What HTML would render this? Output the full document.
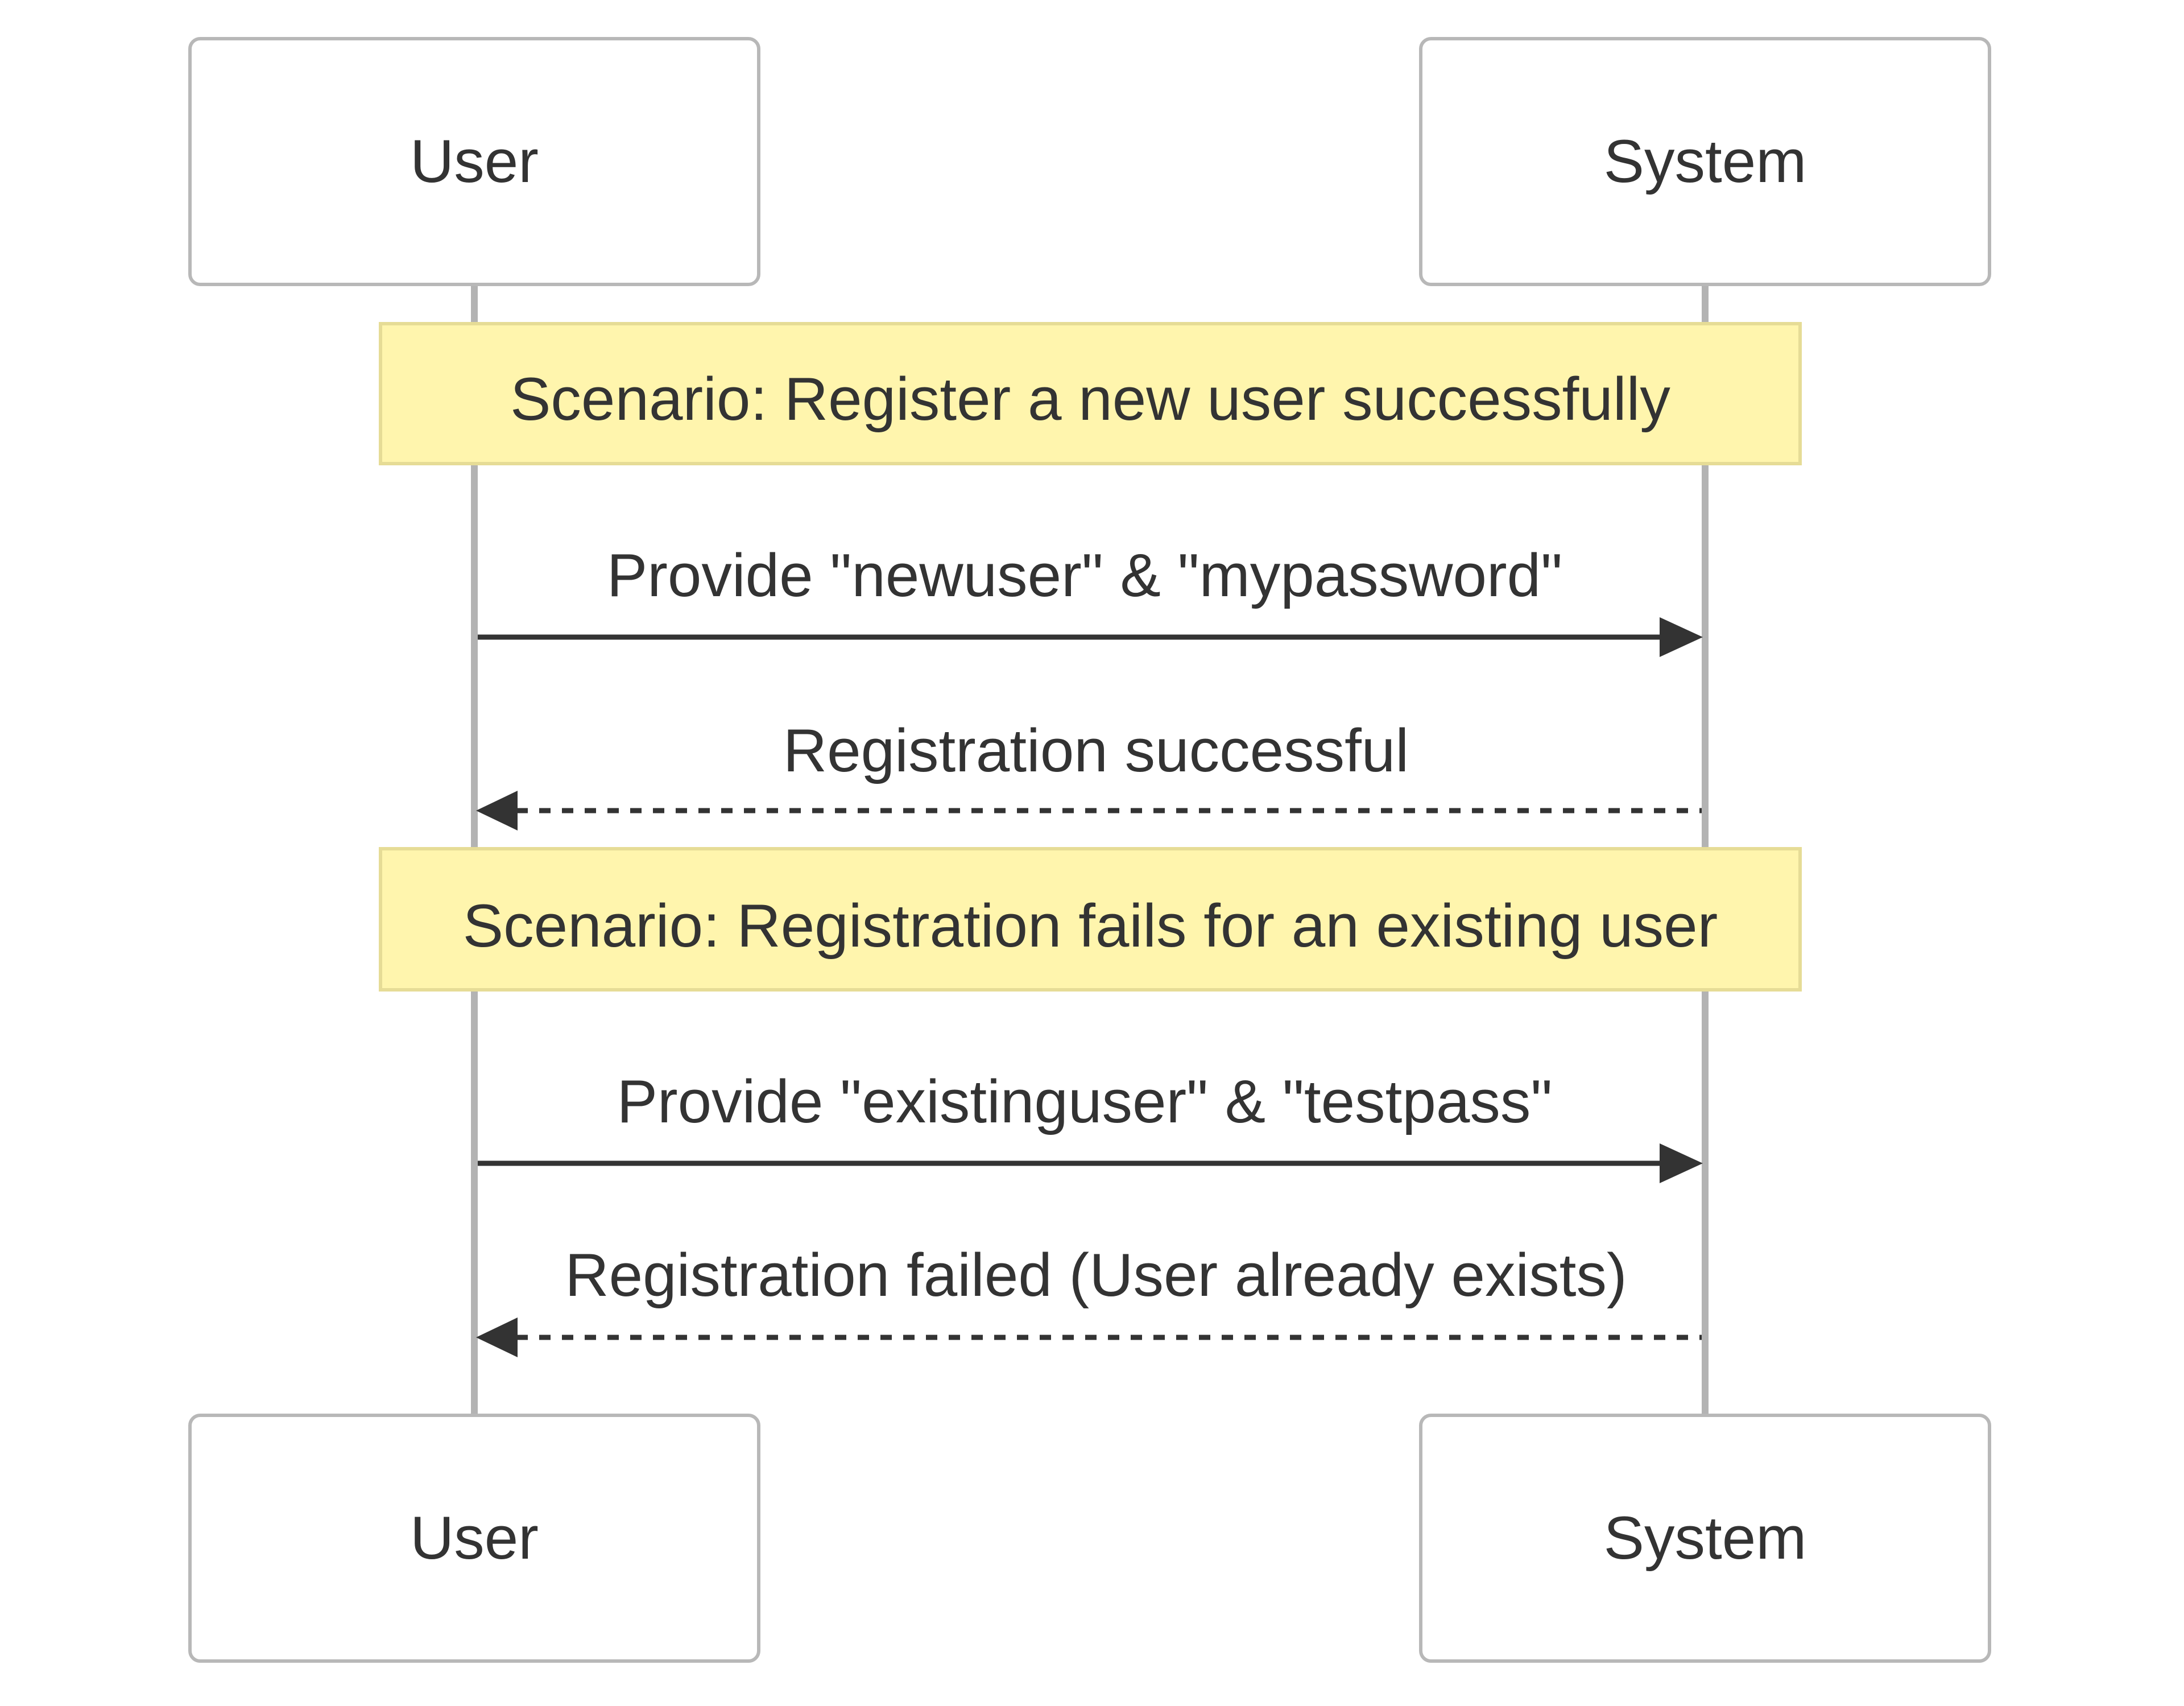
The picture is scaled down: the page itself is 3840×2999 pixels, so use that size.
<!DOCTYPE html>
<html><head><meta charset="utf-8"><style>
html,body{margin:0;padding:0;background:#fff;}
svg{display:block;}
text{font-family:"Liberation Sans",Arial,sans-serif;fill:#333;}
</style></head><body>
<svg width="3840" height="2999" viewBox="0 0 3840 2999" xmlns="http://www.w3.org/2000/svg">
<rect width="3840" height="2999" fill="#fff"/>
<line x1="834" y1="500" x2="834" y2="2488" stroke="#b3b3b3" stroke-width="12"/>
<line x1="2998" y1="500" x2="2998" y2="2488" stroke="#b3b3b3" stroke-width="12"/>
<rect x="334" y="68" width="1000" height="432" rx="18" fill="#fff" stroke="#b8b8b8" stroke-width="6"/>
<text x="834" y="320" font-size="107" text-anchor="middle">User</text>
<rect x="2498" y="68" width="1000" height="432" rx="18" fill="#fff" stroke="#b8b8b8" stroke-width="6"/>
<text x="2998" y="320" font-size="107" text-anchor="middle">System</text>
<rect x="669" y="569" width="2496" height="246" fill="#fff5ad" stroke="#e6dc96" stroke-width="6"/>
<text x="1917" y="738" font-size="107" text-anchor="middle">Scenario: Register a new user successfully</text>
<text x="1907" y="1048" font-size="107" text-anchor="middle">Provide "newuser" &amp; "mypassword"</text>
<line x1="840" y1="1120" x2="2928" y2="1120" stroke="#333" stroke-width="9"/>
<polygon points="2918,1085 2994,1120 2918,1155" fill="#333"/>
<text x="1927" y="1356" font-size="107" text-anchor="middle">Registration successful</text>
<line x1="908" y1="1425" x2="2992" y2="1425" stroke="#333" stroke-width="9" stroke-dasharray="20,20"/>
<polygon points="910,1390 837,1425 910,1460" fill="#333"/>
<rect x="669" y="1492" width="2496" height="248" fill="#fff5ad" stroke="#e6dc96" stroke-width="6"/>
<text x="1917" y="1664" font-size="107" text-anchor="middle">Scenario: Registration fails for an existing user</text>
<text x="1907" y="1973" font-size="107" text-anchor="middle">Provide "existinguser" &amp; "testpass"</text>
<line x1="840" y1="2045" x2="2928" y2="2045" stroke="#333" stroke-width="9"/>
<polygon points="2918,2010 2994,2045 2918,2080" fill="#333"/>
<text x="1927" y="2278" font-size="107" text-anchor="middle">Registration failed (User already exists)</text>
<line x1="908" y1="2351" x2="2992" y2="2351" stroke="#333" stroke-width="9" stroke-dasharray="20,20"/>
<polygon points="910,2316 837,2351 910,2386" fill="#333"/>
<rect x="334" y="2488" width="1000" height="432" rx="18" fill="#fff" stroke="#b8b8b8" stroke-width="6"/>
<text x="834" y="2740" font-size="107" text-anchor="middle">User</text>
<rect x="2498" y="2488" width="1000" height="432" rx="18" fill="#fff" stroke="#b8b8b8" stroke-width="6"/>
<text x="2998" y="2740" font-size="107" text-anchor="middle">System</text>
</svg>
</body></html>
